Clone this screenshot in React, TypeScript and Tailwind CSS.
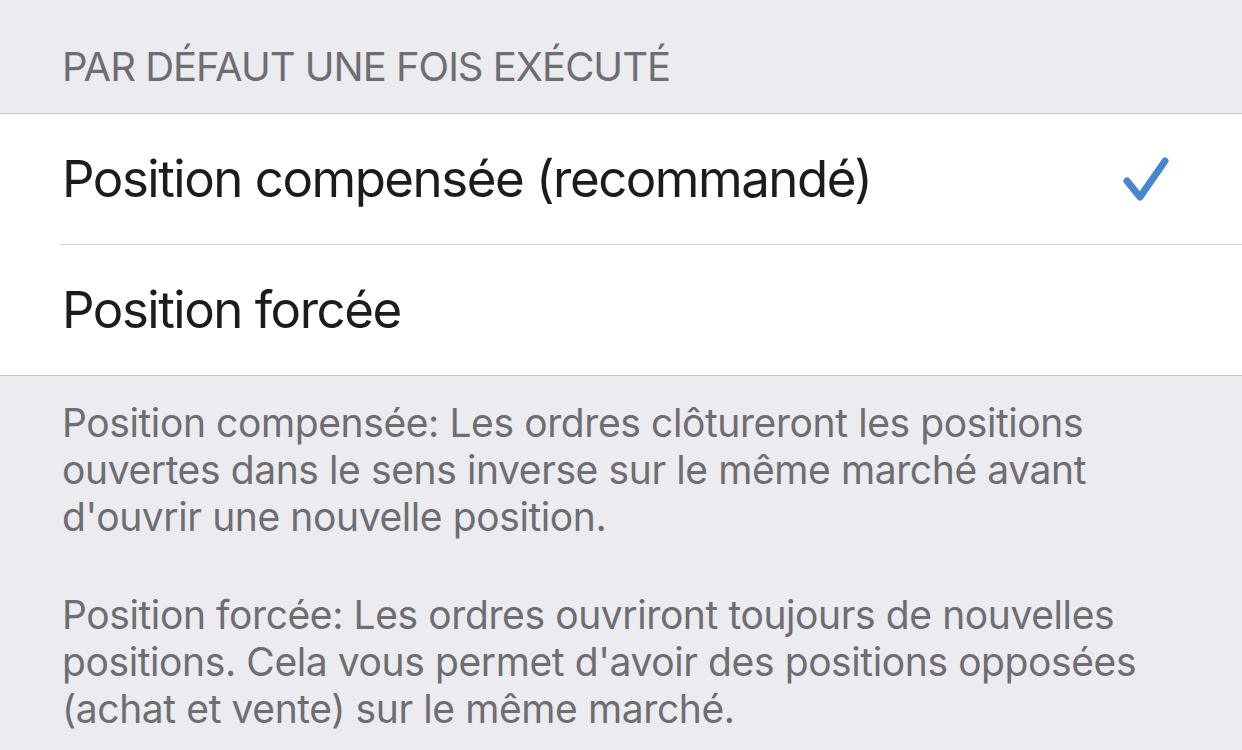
import React from 'react';

const font = { fontFamily: 'Inter, "Noto Sans", sans-serif' };

const Check = () => (
  <svg width="50" height="50" viewBox="1120 155 50 50" className="shrink-0">
    <path
      d="M1127 182 L1140 198 L1165 162"
      fill="none"
      stroke="#4A86CC"
      strokeWidth="7"
      strokeLinecap="round"
      strokeLinejoin="round"
    />
  </svg>
);

export default function App() {
  return (
    <div className="w-[1242px] h-[750px] overflow-hidden bg-[#EBEBF0]" style={font}>
      {/* Section header */}
      <div className="h-[113px] pl-[62px] pt-[43px] text-[40px] leading-[48px] text-[#6D6D72] tracking-[-1px]">
        PAR DÉFAUT UNE FOIS EXÉCUTÉ
      </div>
      <div className="h-px bg-[#C8C7CC]" />

      {/* Options */}
      <div className="bg-white">
        <div className="h-[130px] pl-[62px] pr-[72px] flex items-center justify-between">
          <span className="text-[51px] text-[#1C1C1E] tracking-[-1.5px]">Position compensée (recommandé)</span>
          <Check />
        </div>
        <div className="ml-[60px] h-px bg-[#D1D1D6]" />
        <div className="h-[130px] pl-[62px] flex items-center">
          <span className="text-[51px] text-[#1C1C1E] tracking-[-1.5px]">Position forcée</span>
        </div>
      </div>
      <div className="h-px bg-[#C8C7CC]" />

      {/* Footer */}
      <div className="pl-[62px] pt-[23px] text-[39px] leading-[47px] text-[#6D6D72] tracking-[-0.4px]">
        <p>
          Position compensée: Les ordres clôtureront les positions
          <br />
          ouvertes dans le sens inverse sur le même marché avant
          <br />
          d'ouvrir une nouvelle position.
        </p>
        <p className="mt-[51px]">
          Position forcée: Les ordres ouvriront toujours de nouvelles
          <br />
          positions. Cela vous permet d'avoir des positions opposées
          <br />
          (achat et vente) sur le même marché.
        </p>
      </div>
    </div>
  );
}
